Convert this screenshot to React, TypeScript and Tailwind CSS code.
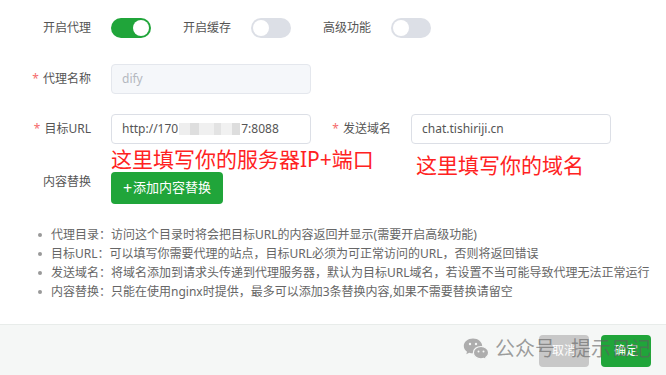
import React from 'react';

const font = { fontFamily: '"Noto Sans", "Noto Sans CJK SC", sans-serif' };

function Switch({ on }: { on?: boolean }) {
  return (
    <div
      className={`relative w-[40px] h-[20px] rounded-full ${on ? 'bg-[#20a53a]' : 'bg-[#dcdfe6]'}`}
    >
      <div
        className={`absolute top-[2px] w-[16px] h-[16px] rounded-full bg-white ${on ? 'left-[22px]' : 'left-[2px]'}`}
      />
    </div>
  );
}

function Label({ text, required }: { text: string; required?: boolean }) {
  return (
    <div className="w-[100px] pr-[20px] text-right text-[12px] text-[#555] shrink-0">
      {required && <span className="text-[#f56c6c] mr-[4px]">*</span>}
      {text}
    </div>
  );
}

function WeChatIcon() {
  return (
    <svg width="26" height="22" viewBox="0 0 26 22">
      <path d="M10 0.5C4.8 0.5 0.8 3.9 0.8 8c0 2.3 1.2 4.3 3.2 5.7L3.3 16.2l2.9-1.5c1.2.4 2.4.6 3.8.6 5.2 0 9.2-3.4 9.2-7.3S15.2 0.5 10 0.5z" fill="#adadad" />
      <circle cx="7" cy="6" r="1.2" fill="#f5f7f6" />
      <circle cx="13" cy="6" r="1.2" fill="#f5f7f6" />
      <path d="M18 8.5c-4.3 0-7.6 2.8-7.6 6.2s3.3 6.2 7.6 6.2c1 0 2-.2 2.9-.5l2.5 1.3-.6-2.1c1.7-1.1 2.8-2.9 2.8-4.9 0-3.4-3.4-6.2-7.6-6.2z" fill="#adadad" stroke="#f5f7f6" strokeWidth="1.2" />
      <circle cx="15.5" cy="13.5" r="1" fill="#f5f7f6" />
      <circle cx="20.5" cy="13.5" r="1" fill="#f5f7f6" />
    </svg>
  );
}

const tips = [
  '代理目录：访问这个目录时将会把目标URL的内容返回并显示(需要开启高级功能)',
  '目标URL：可以填写你需要代理的站点，目标URL必须为可正常访问的URL，否则将返回错误',
  '发送域名：将域名添加到请求头传递到代理服务器，默认为目标URL域名，若设置不当可能导致代理无法正常运行',
  '内容替换：只能在使用nginx时提供，最多可以添加3条替换内容,如果不需要替换请留空',
];

export default function App() {
  return (
    <div className="relative w-[666px] h-[375px] bg-white overflow-hidden flex flex-col" style={font}>
      <div className="relative flex-1 pl-[11px] pt-[18px]">
        {/* switches */}
        <div className="flex items-center h-[20px]">
          <Label text="开启代理" />
          <Switch on />
          <Label text="开启缓存" />
          <Switch />
          <Label text="高级功能" />
          <Switch />
        </div>

        {/* proxy name */}
        <div className="flex items-center mt-[26px]">
          <Label text="代理名称" required />
          <div className="w-[200px] h-[30px] rounded-[4px] border border-[#e4e7ed] bg-[#f5f7fa] pl-[10px] flex items-center text-[12px] text-[#b4b8bf]">
            dify
          </div>
        </div>

        {/* target url + domain */}
        <div className="flex items-center mt-[20px]">
          <Label text="目标URL" required />
          <div className="w-[200px] h-[30px] rounded-[4px] border border-[#dcdfe6] bg-white pl-[10px] flex items-center text-[12px] text-[#555]">
            <span>http://170</span>
            <span className="inline-flex items-center h-[12px] mx-[1px]">
              <span className="w-[11px] h-[12px] bg-[#eeeeee]" />
              <span className="w-[9px] h-[12px] bg-[#dedede]" />
              <span className="w-[15px] h-[12px] bg-[#f0f0f0]" />
              <span className="w-[7px] h-[12px] bg-[#e3e3e3]" />
              <span className="w-[11px] h-[12px] bg-[#f1f1f1]" />
              <span className="w-[8px] h-[12px] bg-[#dddddd]" />
            </span>
            <span>7:8088</span>
          </div>
          <Label text="发送域名" required />
          <div className="w-[200px] h-[30px] rounded-[4px] border border-[#dcdfe6] bg-white pl-[10px] flex items-center text-[12px] text-[#555]">
            chat.tishiriji.cn
          </div>
        </div>

        {/* content replace */}
        <div className="flex items-start mt-[28px]">
          <div className="pt-[1px]">
            <Label text="内容替换" />
          </div>
          <button className="w-[112px] h-[32px] rounded-[4px] bg-[#20a53a] text-white text-[13px] flex items-center justify-center">
            <span className="text-[16px] leading-none mr-[1px]">+</span>添加内容替换
          </button>
        </div>

        {/* tips */}
        <ul className="mt-[21px] ml-[27px]">
          {tips.map((t) => (
            <li key={t} className="flex items-center h-[19px] text-[12px] text-[#666] whitespace-nowrap">
              <span className="w-[4px] h-[4px] rounded-full bg-[#999] mr-[9px] shrink-0" />
              {t}
            </li>
          ))}
        </ul>

        {/* red annotations */}
        <div className="absolute left-[111px] top-[146px] text-[21px] leading-[26px] text-[#ff2222] whitespace-nowrap">
          这里填写你的服务器IP+端口
        </div>
        <div className="absolute left-[416px] top-[152px] text-[21px] leading-[26px] text-[#ff2222] whitespace-nowrap">
          这里填写你的域名
        </div>
      </div>

      {/* footer */}
      <div className="h-[51px] shrink-0 border-t border-[#e8ecea] bg-[#f5f7f6] flex justify-end items-start pt-[10px] pr-[15px] gap-[12px]">
        <button className="w-[50px] h-[32px] rounded-[4px] bg-[#c8c8c8] text-white text-[12px]">取消</button>
        <button className="w-[50px] h-[32px] rounded-[4px] bg-[#20a53a] text-white text-[12px]">确定</button>
      </div>

      {/* watermark */}
      <div className="absolute z-10 left-[463px] top-[336px] flex items-center pointer-events-none">
        <WeChatIcon />
        <span className="ml-[6px] text-[20px] leading-[26px] text-[rgba(95,95,95,0.6)] whitespace-nowrap">
          公众号
        </span>
        <span className="ml-[16px] text-[20px] leading-[26px] text-[rgba(95,95,95,0.6)] whitespace-nowrap">
          提示日记
        </span>
      </div>
    </div>
  );
}
